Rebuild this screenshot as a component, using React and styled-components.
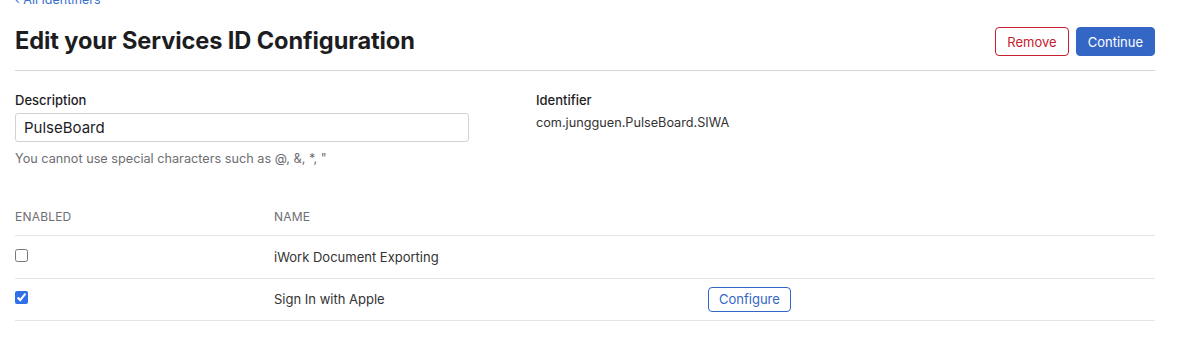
import React from 'react'
import styled, { createGlobalStyle } from 'styled-components'

const GlobalStyle = createGlobalStyle`
  * {
    box-sizing: border-box;
  }
  body {
    margin: 0;
    background: #fff;
    color: #1d1d1f;
    font-family: Inter, 'Liberation Sans', sans-serif;
    overflow: hidden;
  }
`

const Page = styled.div`
  width: 1140px;
  margin-left: 15px;
  margin-top: -8px;
`

const BackLink = styled.a`
  display: block;
  font-size: 12.5px;
  line-height: 15px;
  color: #3a6fd0;
  text-decoration: none;
`

const Header = styled.div`
  display: flex;
  align-items: flex-start;
  justify-content: space-between;
  padding-top: 19px;
  padding-bottom: 14px;
  border-bottom: 1px solid #d6d6d6;
`

const Title = styled.h1`
  margin: 0;
  font-size: 23.6px;
  line-height: 29px;
  font-weight: 700;
  letter-spacing: -0.1px;
  color: #1d1d1f;
`

const Actions = styled.div`
  display: flex;
  gap: 7px;
  padding-top: 1px;
`

const Button = styled.button`
  height: ${(p) => (p.$small ? '25px' : '29px')};
  padding: 0 ${(p) => (p.$small ? '10px' : '11px')};
  border-radius: 4px;
  font-family: inherit;
  font-size: 13px;
  cursor: pointer;
  border: 1px solid ${(p) => p.$color};
  background: ${(p) => (p.$filled ? p.$color : '#fff')};
  color: ${(p) => (p.$filled ? '#fff' : p.$color)};
`

const Fields = styled.div`
  display: grid;
  grid-template-columns: 454px 1fr;
  column-gap: 67px;
  padding-top: 21px;
`

const Field = styled.div`
  display: flex;
  flex-direction: column;
`

const Label = styled.div`
  font-size: 13px;
  line-height: 16px;
  font-weight: 500;
  color: #1d1d1f;
  margin-bottom: 5px;
`

const Input = styled.input`
  height: 29px;
  width: 100%;
  padding: 0 8px;
  border: 1px solid #d2d2d2;
  border-radius: 3px;
  font-family: inherit;
  font-size: 15px;
  color: #1d1d1f;
  outline: none;
`

const Hint = styled.div`
  margin-top: 9px;
  font-size: 12.7px;
  line-height: 15px;
  color: #6e6e73;
`

const Value = styled.div`
  margin-top: 2px;
  font-size: 12.7px;
  line-height: 16px;
  color: #333;
`

const Table = styled.div`
  margin-top: 40px;
`

const Row = styled.div`
  display: grid;
  grid-template-columns: 259px 434px 1fr;
  align-items: center;
  height: ${(p) => (p.$head ? '30px' : '42.5px')};
  border-bottom: 1px solid #e6e6e6;
  font-size: ${(p) => (p.$head ? '12px' : '13px')};
  color: ${(p) => (p.$head ? '#6e6e73' : '#333')};
  letter-spacing: ${(p) => (p.$head ? '0.2px' : '0')};
  padding-bottom: ${(p) => (p.$head ? '8px' : '0')};
`

const Check = styled.input`
  margin: 0 0 2px;
  width: 13px;
  height: 13px;
  accent-color: #2f6fe8;
`

const rows = [
  { name: 'iWork Document Exporting', enabled: false },
  { name: 'Sign In with Apple', enabled: true, configure: true },
]

const App = () => (
  <>
    <GlobalStyle />
    <Page>
      <BackLink href="#">‹ All Identifiers</BackLink>
      <Header>
        <Title>Edit your Services ID Configuration</Title>
        <Actions>
          <Button $color="#c5202f">Remove</Button>
          <Button $color="#3466c6" $filled>
            Continue
          </Button>
        </Actions>
      </Header>

      <Fields>
        <Field>
          <Label>Description</Label>
          <Input defaultValue="PulseBoard" />
          <Hint>You cannot use special characters such as @, &amp;, *, "</Hint>
        </Field>
        <Field>
          <Label>Identifier</Label>
          <Value>com.jungguen.PulseBoard.SIWA</Value>
        </Field>
      </Fields>

      <Table>
        <Row $head>
          <span>ENABLED</span>
          <span>NAME</span>
          <span />
        </Row>
        {rows.map((r) => (
          <Row key={r.name}>
            <span>
              <Check type="checkbox" defaultChecked={r.enabled} />
            </span>
            <span>{r.name}</span>
            <span>
              {r.configure && (
                <Button $color="#3466c6" $small>
                  Configure
                </Button>
              )}
            </span>
          </Row>
        ))}
      </Table>
    </Page>
  </>
)

export default App
